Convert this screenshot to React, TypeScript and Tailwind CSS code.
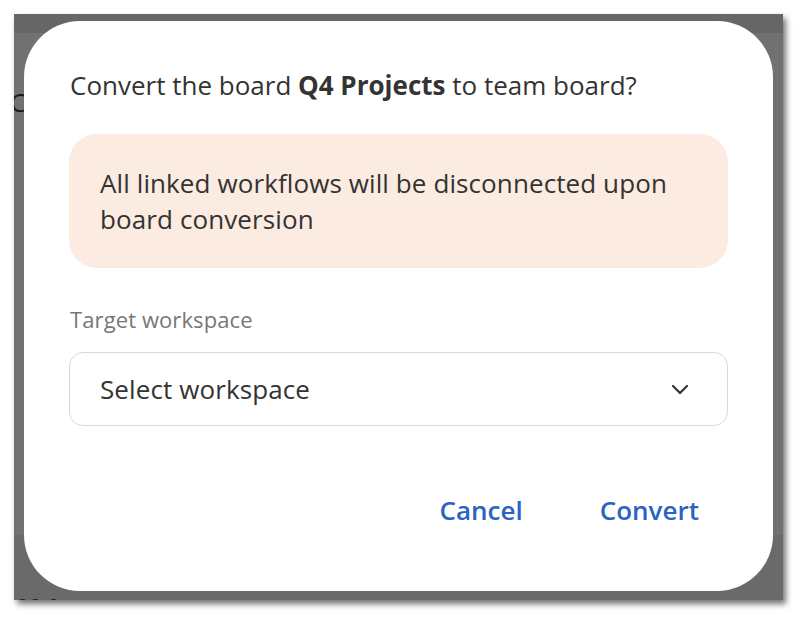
import React from "react";

export default function App() {
  return (
    <div
      className="w-[809px] h-[627px] bg-white pt-[14px] pl-[14px]"
      style={{ fontFamily: '"Open Sans", "Noto Sans", sans-serif' }}
    >
      <div className="relative w-[769px] h-[586px] bg-[#707070] shadow-[3px_4px_6px_rgba(0,0,0,0.55)] overflow-hidden flex flex-col">
        {/* backdrop page content */}
        <div className="h-[19px] bg-[#666666] shrink-0" />
        <div className="flex-1 bg-[#717171] pt-[53px]">
          <div className="text-[26px] leading-[32px] text-[#1a1a1a] -ml-[4px]">C</div>
        </div>
        <div className="h-[65px] bg-[#6a6a6a] shrink-0 relative">
          <div className="absolute left-[2px] bottom-[-14px] text-[22px] leading-[24px] text-[#1a1a1a] font-semibold">ee e</div>
        </div>

        {/* dialog */}
        <div className="absolute left-[10px] top-[7px] w-[749px] h-[570px] bg-white rounded-[56px] pt-[48px] px-[45px] flex flex-col">
          <h2 className="text-[26px] leading-[32px] text-[#333333] font-normal pl-[1px]">
            Convert the board <span className="font-bold">Q4 Projects</span> to team board?
          </h2>
          <div className="mt-[33px] bg-[#fcebe0] rounded-[28px] px-[31px] py-[31px] text-[26px] leading-[36px] text-[#333333] tracking-[0.1px]">
            All linked workflows will be disconnected upon board conversion
          </div>
          <label className="mt-[37px] text-[22px] leading-[28px] text-[#777777] pl-[1px] tracking-[0.1px]">Target workspace</label>
          <div className="mt-[19px] h-[74px] border border-[#d3dbe2] rounded-[14px] flex items-center justify-between pl-[30px] pr-[38px]">
            <span className="text-[26px] leading-[32px] text-[#333333] tracking-[0.1px]">Select workspace</span>
            <svg width="18" height="11" viewBox="0 0 18 11" fill="none">
              <path d="M2 2 L9 9 L16 2" stroke="#333333" strokeWidth="2.2" strokeLinecap="round" strokeLinejoin="round" />
            </svg>
          </div>
          <div className="mt-[68px] flex justify-end gap-[77px] pr-[29px]">
            <button className="text-[26px] leading-[32px] font-semibold text-[#2a64c2]">Cancel</button>
            <button className="text-[26px] leading-[32px] font-semibold text-[#2a64c2]">Convert</button>
          </div>
        </div>
      </div>
    </div>
  );
}
